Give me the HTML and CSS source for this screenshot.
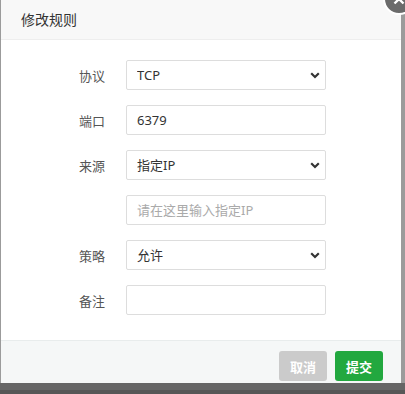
FILE: index.html
```html
<!DOCTYPE html>
<html lang="zh-CN">
<head>
  <meta charset="UTF-8">
  <meta name="viewport" content="width=device-width,initial-scale=1.0">
  <title>修改规则</title>
  <link rel="stylesheet" href="styles.css">
</head>
<body>
  <div class="dialog">
    <div class="dialog-head">修改规则</div>
    <form class="rule-form" autocomplete="off">
      <div class="row">
        <label class="label">协议</label>
        <div class="select-wrap">
          <select class="field">
            <option>TCP</option>
            <option>UDP</option>
          </select>
          <svg class="arrow" width="10" height="7" viewBox="0 0 10 7"><path d="M1.2 1.3 L5 5 L8.8 1.3" fill="none" stroke="#333" stroke-width="2.2"/></svg>
        </div>
      </div>
      <div class="row">
        <label class="label">端口</label>
        <input class="field" type="text" value="6379">
      </div>
      <div class="row">
        <label class="label">来源</label>
        <div class="select-wrap">
          <select class="field">
            <option>指定IP</option>
            <option>所有IP</option>
          </select>
          <svg class="arrow" width="10" height="7" viewBox="0 0 10 7"><path d="M1.2 1.3 L5 5 L8.8 1.3" fill="none" stroke="#333" stroke-width="2.2"/></svg>
        </div>
      </div>
      <div class="row">
        <span class="label"></span>
        <input class="field" type="text" placeholder="请在这里输入指定IP">
      </div>
      <div class="row">
        <label class="label">策略</label>
        <div class="select-wrap">
          <select class="field">
            <option>允许</option>
            <option>拒绝</option>
          </select>
          <svg class="arrow" width="10" height="7" viewBox="0 0 10 7"><path d="M1.2 1.3 L5 5 L8.8 1.3" fill="none" stroke="#333" stroke-width="2.2"/></svg>
        </div>
      </div>
      <div class="row">
        <label class="label">备注</label>
        <input class="field" type="text">
      </div>
    </form>
    <div class="dialog-foot">
      <button type="button" class="btn btn-cancel">取消</button>
      <button type="button" class="btn btn-submit">提交</button>
    </div>
    <span class="close-btn">
      <svg width="12" height="12" viewBox="0 0 12 12"><path d="M1.5 1.5 L10.5 10.5 M10.5 1.5 L1.5 10.5" stroke="#fff" stroke-width="2.4" fill="none"/></svg>
    </span>
  </div>
</body>
</html>
```
FILE: styles.css
```css
html, body {
  margin: 0;
  padding: 0;
  height: 100%;
}
body {
  width: 405px;
  height: 394px;
  overflow: hidden;
  background: linear-gradient(#9b9b9b 0, #9b9b9b 383px, #666 383px, #666 390px, #575757 390px);
  font-family: "Noto Sans", "Noto Sans CJK SC", sans-serif;
  color: #333;
}
.dialog {
  position: relative;
  margin-left: 1px;
  width: 400px;
  height: 383px;
  background: #fff;
  display: flex;
  flex-direction: column;
}
.dialog-head {
  height: 39px;
  line-height: 39px;
  padding-left: 20px;
  background: #f8f8f8;
  border-bottom: 1px solid #eee;
  font-size: 14px;
  color: #333;
  font-family: "Noto Sans CJK SC", sans-serif;
}
.rule-form {
  padding-top: 20px;
  padding-bottom: 25px;
  display: flex;
  flex-direction: column;
  gap: 15px;
}
.row {
  display: flex;
  align-items: center;
  gap: 21px;
  height: 30px;
}
.label {
  width: 104px;
  text-align: right;
  font-size: 13px;
  color: #555;
  font-family: "Noto Sans CJK SC", sans-serif;
}
.field {
  box-sizing: border-box;
  width: 200px;
  height: 30px;
  margin: 0;
  padding: 0 10px;
  border: 1px solid #ddd;
  border-radius: 2px;
  background: #fff;
  font-size: 13px;
  color: #333;
  font-family: "Noto Sans", "Noto Sans CJK SC", sans-serif;
  outline: none;
}
.field::placeholder { color: #aaa; }
select.field {
  appearance: none;
  -webkit-appearance: none;
}
.select-wrap {
  position: relative;
  width: 200px;
  height: 30px;
}
.arrow {
  position: absolute;
  right: 6px;
  top: 12px;
}
.dialog-foot {
  flex: 1;
  background: #f5f7f7;
  border-top: 1px solid #e8ecec;
  display: flex;
  justify-content: flex-end;
  align-items: flex-start;
  gap: 8px;
  padding: 10px 18px 0 0;
}
.btn {
  width: 48px;
  height: 30px;
  border: none;
  border-radius: 3px;
  color: #fff;
  font-size: 13px;
  font-weight: bold;
  font-family: "Noto Sans CJK SC", sans-serif;
  padding: 0;
}
.btn-cancel { background: #cbcbcb; }
.btn-submit { background: #22a83f; }
.close-btn {
  position: absolute;
  left: 382px;
  top: -17px;
  width: 28px;
  height: 28px;
  border: 2px solid #fff;
  border-radius: 50%;
  background: #6b6b6b;
  display: flex;
  align-items: center;
  justify-content: center;
}
```
